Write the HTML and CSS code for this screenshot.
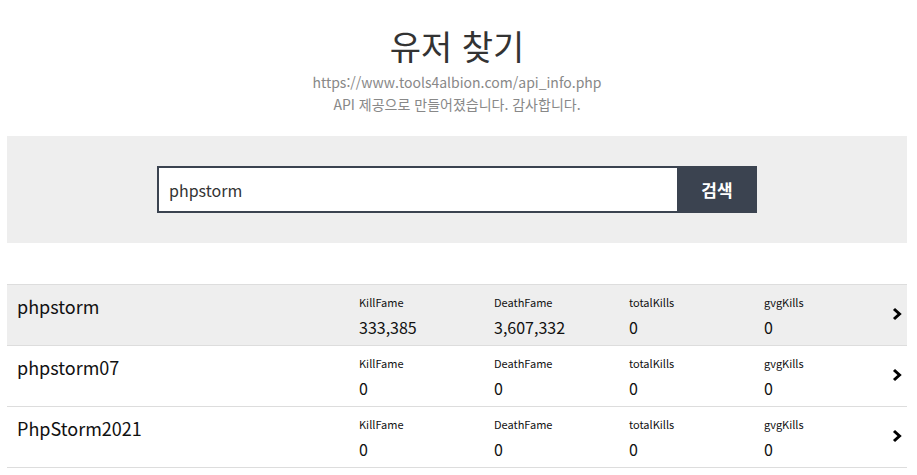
FILE: index.html
```html
<!DOCTYPE html>
<html lang="ko">
<head>
<meta charset="utf-8">
<title>유저 찾기</title>
<link rel="stylesheet" href="styles.css">
</head>
<body>
<div class="wrap">
  <header class="header">
    <h1 class="title">유저 찾기</h1>
    <p class="sub">https://www.tools4albion.com/api_info.php</p>
    <p class="sub">API 제공으로 만들어졌습니다. 감사합니다.</p>
  </header>

  <section class="search-box">
    <form class="search-form">
      <input class="search-input" type="text" value="phpstorm">
      <button class="search-btn" type="button">검색</button>
    </form>
  </section>

  <ul class="results">
    <li class="row row-active">
      <div class="name">phpstorm</div>
      <div class="stat"><span class="label">KillFame</span><span class="value">333,385</span></div>
      <div class="stat"><span class="label">DeathFame</span><span class="value">3,607,332</span></div>
      <div class="stat"><span class="label">totalKills</span><span class="value">0</span></div>
      <div class="stat"><span class="label">gvgKills</span><span class="value">0</span></div>
      <svg class="chev" width="10" height="14" viewBox="0 0 10 14"><path d="M2 2 L7.5 7 L2 12" fill="none" stroke="#000" stroke-width="3"/></svg>
    </li>
    <li class="row">
      <div class="name">phpstorm07</div>
      <div class="stat"><span class="label">KillFame</span><span class="value">0</span></div>
      <div class="stat"><span class="label">DeathFame</span><span class="value">0</span></div>
      <div class="stat"><span class="label">totalKills</span><span class="value">0</span></div>
      <div class="stat"><span class="label">gvgKills</span><span class="value">0</span></div>
      <svg class="chev" width="10" height="14" viewBox="0 0 10 14"><path d="M2 2 L7.5 7 L2 12" fill="none" stroke="#000" stroke-width="3"/></svg>
    </li>
    <li class="row">
      <div class="name">PhpStorm2021</div>
      <div class="stat"><span class="label">KillFame</span><span class="value">0</span></div>
      <div class="stat"><span class="label">DeathFame</span><span class="value">0</span></div>
      <div class="stat"><span class="label">totalKills</span><span class="value">0</span></div>
      <div class="stat"><span class="label">gvgKills</span><span class="value">0</span></div>
      <svg class="chev" width="10" height="14" viewBox="0 0 10 14"><path d="M2 2 L7.5 7 L2 12" fill="none" stroke="#000" stroke-width="3"/></svg>
    </li>
  </ul>
</div>
</body>
</html>
```

FILE: styles.css
```css
* { box-sizing: border-box; }
html, body { margin: 0; padding: 0; background: #fff; }
body {
  font-family: "Noto Sans CJK KR", "Noto Sans", sans-serif;
  color: #222;
}
.wrap {
  width: 900px;
  margin-left: 7px;
}
.header {
  text-align: center;
  padding-top: 24px;
}
.title {
  margin: 0;
  font-size: 34px;
  font-weight: 400;
  line-height: 44px;
  color: #333;
}
.sub {
  margin: 0;
  font-size: 14px;
  line-height: 22px;
  color: #888;
}
.header .sub:first-of-type { margin-top: 3px; }
.search-box {
  margin-top: 21px;
  background: #eee;
  padding: 30px 0;
  display: flex;
  justify-content: center;
}
.search-form {
  display: flex;
  width: 600px;
  height: 47px;
  margin: 0;
}
.search-input {
  flex: 1;
  border: 2px solid #3b4350;
  border-right: none;
  padding: 0 10px;
  font-family: inherit;
  font-size: 16px;
  color: #333;
  background: #fff;
  outline: none;
  height: 47px;
}
.search-btn {
  width: 80px;
  height: 47px;
  border: none;
  background: #3b4350;
  color: #fff;
  font-family: inherit;
  font-size: 17px;
  font-weight: 700;
  padding: 0;
}
.results {
  list-style: none;
  margin: 41px 0 0;
  padding: 0;
  border-top: 1px solid #ddd;
}
.row {
  display: grid;
  grid-template-columns: 342px 135px 135px 135px 1fr auto;
  align-items: start;
  height: 61px;
  padding: 0 5px 0 10px;
  border-bottom: 1px solid #ddd;
  color: #111;
}
.row-active { background: #eee; }
.name {
  font-size: 18px;
  line-height: 26px;
  padding-top: 8px;
}
.stat {
  display: flex;
  flex-direction: column;
  padding-top: 9px;
}
.label {
  font-size: 11px;
  line-height: 16px;
}
.value {
  font-size: 16px;
  line-height: 24px;
  margin-top: 5px;
}
.chev {
  align-self: center;
  display: block;
  margin-top: -2px;
}
```
